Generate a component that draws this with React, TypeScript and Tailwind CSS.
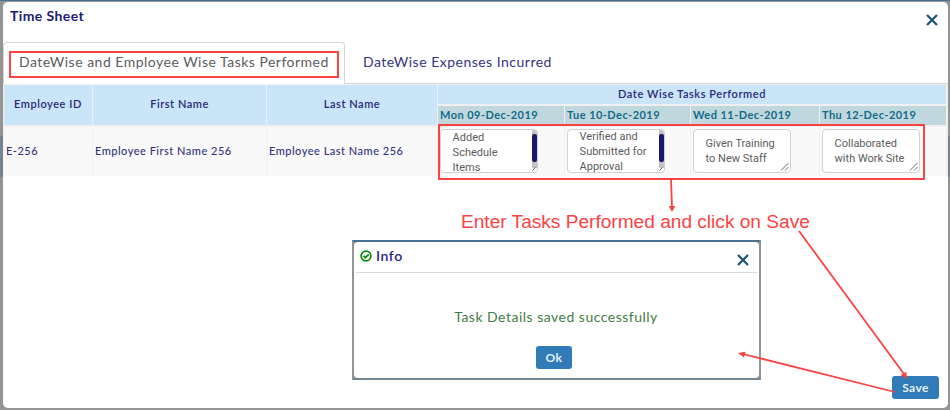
import React from "react";

const columns = "grid grid-cols-[88px_173px_170px_126px_125px_128px_126px] gap-x-px";
const lato = "font-['Lato',sans-serif]";

const tasks = [
  { day: "Mon 09-Dec-2019", lines: ["Added", "Schedule", "Items"], scroll: true, top: "pt-0" },
  { day: "Tue 10-Dec-2019", lines: ["Verified and", "Submitted for", "Approval"], scroll: true, top: "-mt-px" },
  { day: "Wed 11-Dec-2019", lines: ["Given Training", "to New Staff"], scroll: false, top: "pt-[6px]" },
  { day: "Thu 12-Dec-2019", lines: ["Collaborated", "with Work Site"], scroll: false, top: "pt-[6px]" },
];

function Cross() {
  return (
    <svg width="12" height="12" viewBox="0 0 12 12" fill="none" stroke="#205674" strokeWidth="2.3">
      <path d="M1 1 11 11M11 1 1 11" />
    </svg>
  );
}

function Grip({ small }: { small: boolean }) {
  const size = small ? 5 : 9;
  return (
    <svg className="absolute right-px bottom-px" width={size} height={size} viewBox={small ? "4 4 5 5" : "0 0 9 9"} stroke="#555" strokeWidth="0.9">
      <path d={small ? "M5.5 8.5 8.5 5.5" : "M1 8.5 8.5 1M5 8.5 8.5 5"} />
    </svg>
  );
}

function TaskBox({ lines, scroll, top }: { lines: string[]; scroll: boolean; top: string }) {
  return (
    <div className="relative flex h-[44px] w-[98px] justify-between overflow-hidden rounded-[4px] border border-[#ced0da] bg-white">
      <div className={`pl-[11.6px] ${top}`}>
        {lines.map((line) => (
          <div key={line} className="h-[15px] whitespace-nowrap font-['Roboto',sans-serif] text-[11px] leading-[15px] text-[#5c5c5c]">
            {line}
          </div>
        ))}
      </div>
      {scroll && (
        <div className="flex w-[5px] flex-col bg-[#c4c4c4]">
          <div className="mt-[4px] h-[28px] rounded-[2px] bg-[#191970]" />
          <div className="h-[6px]" />
          <div className="grow bg-white" />
        </div>
      )}
      <Grip small={scroll} />
    </div>
  );
}

function HeadCell({ children }: { children: React.ReactNode }) {
  return (
    <div className="row-span-2 flex items-center justify-center bg-[#cae5f8] pb-px text-[11px] font-semibold tracking-[0.54px] text-[#29297b]">
      {children}
    </div>
  );
}

function BodyCell({ children }: { children: React.ReactNode }) {
  return (
    <div className="flex items-center bg-[#f9f9f9] pb-px pl-[2px] text-[11px] font-medium tracking-[0.5px] whitespace-nowrap text-[#34347f]">
      {children}
    </div>
  );
}

export default function App() {
  return (
    <div className={`relative h-[410px] w-[950px] overflow-hidden border-t border-[#4a708f] bg-[#949494] bg-[linear-gradient(to_bottom,#949494_135px,#738591_135px,#738591_176px,#949494_176px)] pt-px pr-[2px] pb-[2px] pl-[3px] ${lato}`}>
      <div className="flex h-[406px] flex-col overflow-hidden rounded-[5px] bg-white">
        <header className="flex h-[40px] shrink-0 justify-between pt-[4px] pr-[10px] pl-[7px]">
          <h1 className="text-[14px] leading-[20px] font-bold tracking-[0.4px] text-[#20206f]">Time Sheet</h1>
          <div className="pt-[8px]"><Cross /></div>
        </header>
        <nav className="flex h-[42px] shrink-0 text-[14px] leading-[38px] tracking-[0.49px]">
          <div className="w-[342px] rounded-t-[4px] border border-b-0 border-[#d5d5d5] pl-[15px] whitespace-nowrap text-[#5c5c5c]">
            DateWise and Employee Wise Tasks Performed
          </div>
          <div className="grow border-b border-[#d5d5d5] pt-px pl-[18px] text-[#34347f]">DateWise Expenses Incurred</div>
        </nav>
        <section className="h-[92px] shrink-0 bg-[#f0f0f0] pt-px pl-px">
          <div className={`${columns} grid-rows-[19px_19px] gap-y-[2px]`}>
            <HeadCell>Employee ID</HeadCell>
            <HeadCell>First Name</HeadCell>
            <HeadCell>Last Name</HeadCell>
            <div className="col-span-4 bg-[#cae5f8] text-center text-[11px] leading-[18px] font-semibold tracking-[0.56px] text-[#29297b]">
              Date Wise Tasks Performed
            </div>
            {tasks.map((task) => (
              <div key={task.day} className="bg-[#c0d8dd] pl-[2px] text-[11px] leading-[18px] font-bold tracking-[0.45px] whitespace-nowrap text-[#116b8c]">
                {task.day}
              </div>
            ))}
          </div>
          <div className={`${columns} mt-[2px] h-[49px]`}>
            <BodyCell>E-256</BodyCell>
            <BodyCell>Employee First Name 256</BodyCell>
            <BodyCell>Employee Last Name 256</BodyCell>
            {tasks.map((task) => (
              <div key={task.day} className="bg-[#f9f9f9] pt-[2px] pl-[2px]">
                <TaskBox lines={task.lines} scroll={task.scroll} top={task.top} />
              </div>
            ))}
          </div>
        </section>
        <footer className="mt-auto flex justify-end pr-[9px] pb-[9px]">
          <button className="h-[23px] w-[47px] rounded-[3px] bg-[#307bb8] text-[12px] font-bold tracking-[0.4px] text-[#e9f2f9]">Save</button>
        </footer>
      </div>

      <div className="absolute top-[239px] left-[352px] h-[140px] w-[409px] border-2 border-x-[#949494] border-t-[#4a708f] border-b-[#748490] bg-[#949494]">
        <div className="flex h-full flex-col rounded-[4px] bg-white px-[2px]">
          <div className="flex h-[31px] shrink-0 justify-between border-b border-[#d8d8d8] pr-[8px] pl-[4px]">
            <div className="flex h-[28px] items-center gap-[4px]">
              <svg width="12" height="12" viewBox="0 0 12 12" fill="none" stroke="#0a8a0a">
                <circle cx="6" cy="6" r="4.9" strokeWidth="1.7" />
                <path d="M3.4 5.9 5.3 7.8 8.7 4.3" strokeWidth="1.8" />
              </svg>
              <span className="pb-px text-[14px] font-semibold tracking-[0.6px] text-[#29297b]">Info</span>
            </div>
            <div className="pt-[12px]"><Cross /></div>
          </div>
          <p className="mt-[34px] pr-px text-center text-[14px] leading-[20px] tracking-[0.49px] text-[#437c44]">Task Details saved successfully</p>
          <button className="mt-[19px] ml-[180px] h-[23px] w-[36px] rounded-[3px] bg-[#307bb8] text-[12px] font-bold tracking-[0.4px] text-[#e9f2f9]">Ok</button>
        </div>
      </div>

      <div className="absolute top-[50px] left-[9px] h-[27px] w-[330px] border-2 border-[#fb4343]" />
      <div className="absolute top-[123px] left-[438px] h-[56px] w-[487px] border-2 border-[#fb4343]" />
      <div className="absolute top-[209px] left-[461px] font-['Liberation_Sans',Arial,sans-serif] text-[19.1px] leading-[24px] whitespace-nowrap text-[#fb4343]">
        Enter Tasks Performed and click on Save
      </div>
      <svg className="absolute -top-px left-0" width="950" height="410" viewBox="0 0 950 410" stroke="#fb4343" strokeWidth="1.8" fill="#fb4343">
        <path d="M671 179 672 207M799 231 904 374M895 392 743 354" />
        <path stroke="none" d="M668.8 206 675.2 206 672 212ZM907 379 900.5 375 906.2 371.8ZM738 353 745.4 351.8 744 357.5Z" />
      </svg>
    </div>
  );
}
